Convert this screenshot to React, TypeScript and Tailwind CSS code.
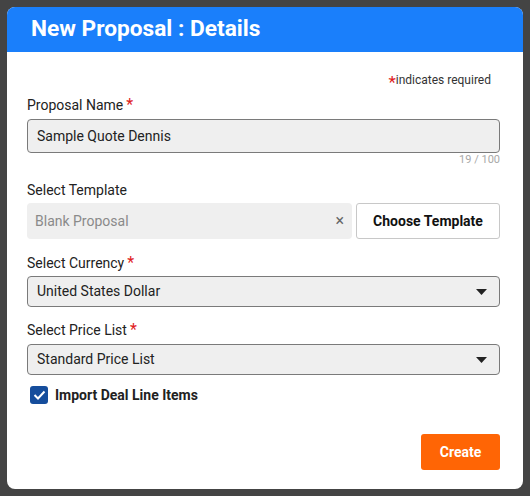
export default function App() {
  const font = { fontFamily: "Roboto, 'Liberation Sans', sans-serif" };

  const Caret = () => (
    <svg width="11" height="6" viewBox="0 0 11 6" className="shrink-0">
      <path d="M0 0 L11 0 L5.5 6 Z" fill="#222" />
    </svg>
  );

  const Star = () => <span className="text-[#e0201c] text-[16px] leading-none ml-[3px] relative top-[2px]">*</span>;

  return (
    <div className="w-[530px] h-[496px] bg-[#444444] pt-[7px] pl-[7px]" style={font}>
      <div className="w-[516px] h-[482px] bg-white rounded-[8px] overflow-hidden flex flex-col">
        <div className="h-[45px] bg-[#1a7ffb] flex items-center px-[24px]">
          <h1 className="text-white text-[22.7px] font-bold">New Proposal : Details</h1>
        </div>

        <div className="pl-[20px] pr-[23px] text-[#222]">
          <div className="mt-[20px] h-[16px] flex justify-end pr-[9px] text-[12px] leading-[16px] text-[#333]">
            <span className="text-[#e0201c] text-[17px] leading-none relative top-[2px]">*</span>
            <span>indicates required</span>
          </div>

          <div className="mt-[7px] h-[20px] leading-[20px] text-[14px] flex items-start">
            Proposal Name<Star />
          </div>
          <div className="mt-[4px] h-[34px] bg-[#efefef] border border-[#7a7a7a] rounded-[4px] flex items-center pl-[9px] text-[14px] text-[#222]">
            Sample Quote Dennis
          </div>
          <div className="h-[14px] leading-[14px] text-right text-[11px] text-[#a8a8a8]">19 / 100</div>

          <div className="mt-[13px] h-[20px] leading-[20px] text-[14px]">Select Template</div>
          <div className="mt-[3px] h-[36px] flex gap-[4px]">
            <div className="flex-1 bg-[#efefef] rounded-[4px] flex items-center justify-between pl-[8px] pr-[8px] text-[14px] text-[#8a8a8a]">
              <span>Blank Proposal</span>
              <span className="text-[#666] text-[16px] leading-none">×</span>
            </div>
            <div className="w-[144px] border border-[#c8c8c8] rounded-[3px] flex items-center justify-center text-[14px] font-bold text-[#111]">
              Choose Template
            </div>
          </div>

          <div className="mt-[14px] h-[20px] leading-[20px] text-[14px] flex items-start">
            Select Currency<Star />
          </div>
          <div className="mt-[3px] h-[31px] bg-[#efefef] border border-[#7a7a7a] rounded-[4px] flex items-center justify-between pl-[9px] pr-[12px] text-[14px] text-[#222]">
            <span>United States Dollar</span>
            <Caret />
          </div>

          <div className="mt-[13px] h-[20px] leading-[20px] text-[14px] flex items-start">
            Select Price List<Star />
          </div>
          <div className="mt-[4px] h-[31px] bg-[#efefef] border border-[#7a7a7a] rounded-[4px] flex items-center justify-between pl-[9px] pr-[12px] text-[14px] text-[#222]">
            <span>Standard Price List</span>
            <Caret />
          </div>

          <div className="mt-[11px] h-[18px] flex items-center gap-[7px] pl-[3px]">
            <div className="w-[18px] h-[18px] rounded-[3px] bg-[#154d9c] flex items-center justify-center">
              <svg width="13" height="10" viewBox="0 0 13 10">
                <path d="M1.5 5 L5 8.5 L11.5 1.5" stroke="white" strokeWidth="2" fill="none" />
              </svg>
            </div>
            <span className="text-[14px] font-bold text-[#222]">Import Deal Line Items</span>
          </div>

          <div className="mt-[30px] flex justify-end">
            <button className="w-[79px] h-[36px] bg-[#ff6505] rounded-[3px] text-white text-[14px] font-bold">
              Create
            </button>
          </div>
        </div>
      </div>
    </div>
  );
}
